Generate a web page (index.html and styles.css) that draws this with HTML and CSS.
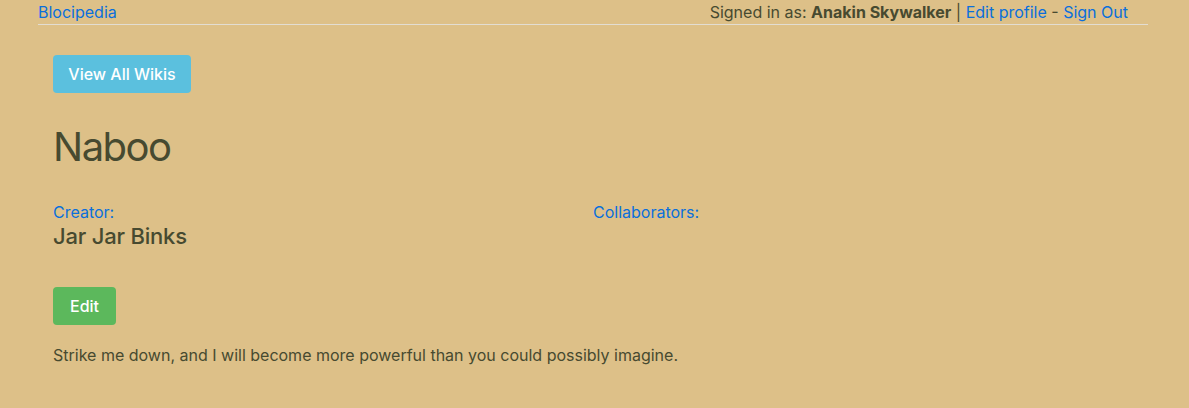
FILE: index.html
```html
<!DOCTYPE html>
<html>
<head>
<meta charset="utf-8">
<link rel="stylesheet" href="styles.css">
</head>
<body>
<div class="page">
  <nav class="nav">
    <a class="brand" href="#">Blocipedia</a>
    <div class="user">Signed in as: <strong>Anakin Skywalker</strong> | <a href="#">Edit profile</a> - <a href="#">Sign Out</a></div>
  </nav>
  <main class="main">
    <a class="btn btn-info" href="#">View All Wikis</a>
    <h1 class="title">Naboo</h1>
    <div class="meta">
      <div class="col">
        <div class="label">Creator:</div>
        <div class="name">Jar Jar Binks</div>
      </div>
      <div class="col">
        <div class="label">Collaborators:</div>
      </div>
    </div>
    <a class="btn btn-success" href="#">Edit</a>
    <p class="body">Strike me down, and I will become more powerful than you could possibly imagine.</p>
  </main>
</div>
</body>
</html>
```
FILE: styles.css
```css
html, body {
  margin: 0;
  padding: 0;
  background: #ddc088;
}
body {
  font-family: Inter, "Liberation Sans", Arial, sans-serif;
  color: #474a30;
  font-size: 16px;
}
a { color: #0a6fdc; text-decoration: none; }
.page {
  padding-left: 38px;
  width: 1110px;
}
.nav {
  display: flex;
  justify-content: space-between;
  align-items: center;
  height: 24px;
  border-bottom: 1px solid #e2ddd2;
  padding-right: 20px;
}
.brand { font-size: 16px; }
.user { font-size: 16px; }
.user strong { font-weight: 700; }
.main {
  padding: 30px 15px 0;
}
.btn {
  display: inline-flex;
  align-items: center;
  justify-content: center;
  height: 38px;
  border-radius: 4px;
  color: #fff;
  font-size: 16px;
  font-weight: 500;
  box-sizing: border-box;
}
.btn-info { background: #5bc0de; width: 138px; }
.btn-success { background: #5cb85c; width: 63px; }
.title {
  margin: 30px 0 0;
  font-size: 40px;
  font-weight: 400;
  line-height: 48px;
  letter-spacing: -1.5px;
}
.meta {
  display: grid;
  grid-template-columns: 540px 540px;
  margin-top: 31px;
  margin-bottom: 37px;
}
.label { color: #0a6fdc; font-size: 16px; line-height: 20px; }
.name { font-size: 22px; line-height: 28px; font-weight: 500; letter-spacing: -0.2px; }
.body { margin: 19px 0 0; font-size: 16px; line-height: 22px; }
```
